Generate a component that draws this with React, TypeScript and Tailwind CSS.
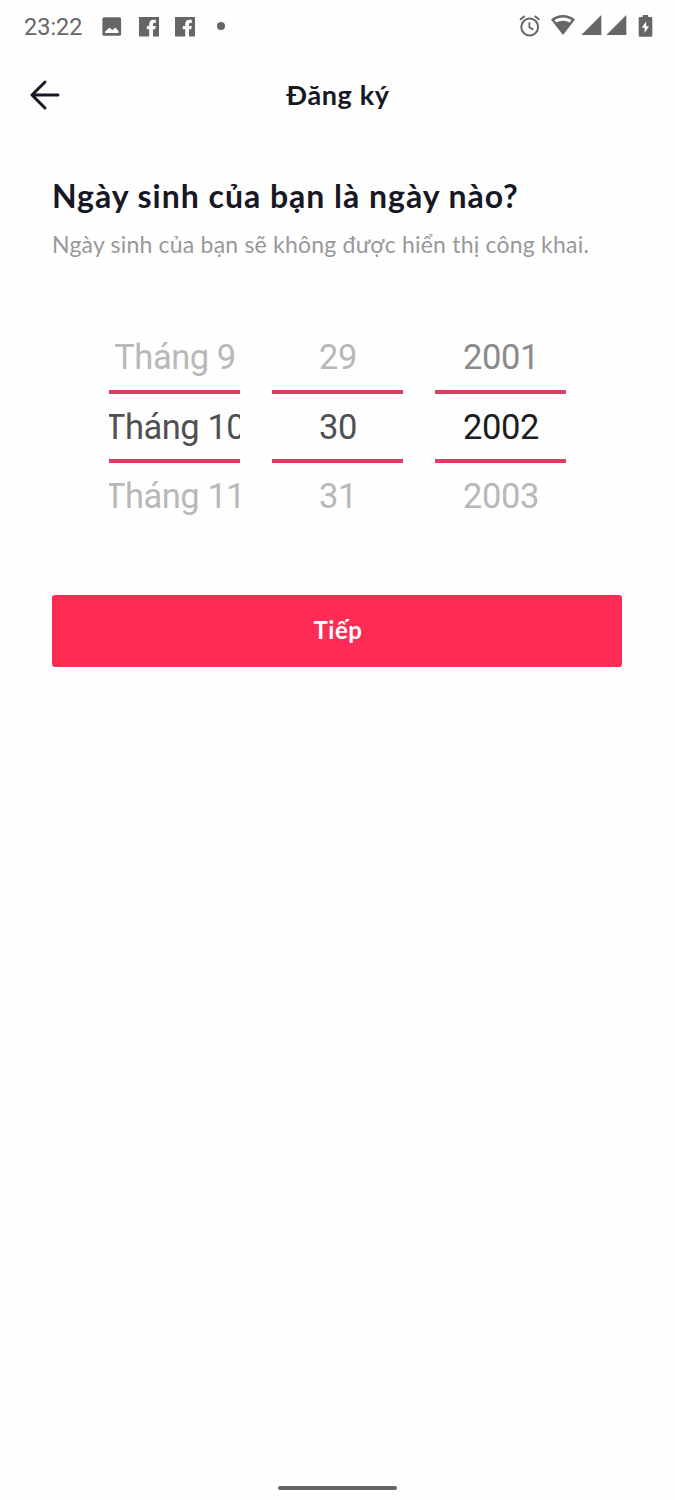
import clsx from "clsx";

type PickerItem = {
  label: string;
  className: string;
};

type PickerColumnProps = {
  items: [PickerItem, PickerItem, PickerItem];
};

const months: PickerColumnProps["items"] = [
  { label: "Tháng 9", className: "text-[#b8b8b8]" },
  { label: "Tháng 10", className: "text-[#505052]" },
  { label: "Tháng 11", className: "text-[#b8b8b8]" },
];

const days: PickerColumnProps["items"] = [
  { label: "29", className: "text-[#b8b8b8]" },
  { label: "30", className: "text-[#505052]" },
  { label: "31", className: "text-[#b8b8b8]" },
];

const years: PickerColumnProps["items"] = [
  { label: "2001", className: "text-[#8a8a8b]" },
  { label: "2002", className: "text-[#1c1d21]" },
  { label: "2003", className: "text-[#b8b8b8]" },
];

function FacebookIcon() {
  return (
    <svg width="20" height="20" viewBox="0 0 20 20" fill="currentColor">
      <path d="M0 0H20V19.5H14V12.2H16.2L16.8 8.9H14V7.2C14 6.3 14.4 6 15.4 6H16.8V2.9C16.5 2.8 15.6 2.7 14.6 2.7C12 2.7 10.2 4.2 10.2 7V8.9H7.8V12.2H10.2V19.5H0Z" />
    </svg>
  );
}

function SignalIcon() {
  return (
    <svg width="21" height="21" viewBox="0 0 21 21" fill="currentColor">
      <path d="M20.3 0V20H0.3Z" />
    </svg>
  );
}

function StatusBar() {
  return (
    <div className="flex h-[54px] items-center text-[#666666]">
      <span className="ml-6 w-[59px] whitespace-nowrap pt-0.5 text-[23.5px] leading-none">23:22</span>
      <svg className="ml-[19px]" width="20" height="20" viewBox="0 0 20 20" fill="currentColor">
        <path
          fillRule="evenodd"
          d="M2 0.3H17.5A1.6 1.6 0 0 1 19.1 1.9V17.2A1.6 1.6 0 0 1 17.5 18.8H2A1.6 1.6 0 0 1 0.4 17.2V1.9A1.6 1.6 0 0 1 2 0.3ZM3 15.9H16.5V14L13.3 10.5L10.6 13L7.3 10.8L3 14.7Z"
        />
      </svg>
      <span className="ml-[17px]"><FacebookIcon /></span>
      <span className="ml-4"><FacebookIcon /></span>
      <span className="-mt-0.5 ml-[22px] size-2 rounded-full bg-[#666666]" />
      <div className="ml-auto mr-[22px] flex items-start">
        <svg width="22" height="22" viewBox="0 0 22 22" fill="none" stroke="currentColor">
          <circle cx="11.7" cy="12" r="8.4" strokeWidth="2" />
          <path d="M11.4 7.3V12.3L15.3 14.6" strokeWidth="1.8" />
          <path d="M2 4.8L6.7 1M21.4 4.8L16.7 1" strokeWidth="2" />
        </svg>
        <svg className="ml-[11px]" width="24" height="21" viewBox="0 0 24 21" fill="currentColor">
          <path
            fillRule="evenodd"
            d="M12 0C7.4 0 3.2 1.7 0 4.4L12 20.1L24 4.4C20.8 1.7 16.6 0 12 0ZM12 2.5C15.3 2.5 18.2 3.4 20.6 5L18.7 7.5C16.8 6.4 14.5 5.7 12 5.7S7.2 6.4 5.3 7.5L3.4 5C5.8 3.4 8.7 2.5 12 2.5Z"
          />
        </svg>
        <span className="ml-[6px]"><SignalIcon /></span>
        <span className="ml-1"><SignalIcon /></span>
        <svg className="mb-0.5 ml-[11px]" width="15" height="22" viewBox="0 0 15 22" fill="currentColor">
          <path
            fillRule="evenodd"
            d="M4.8 0H10.2V2H13A1.3 1.3 0 0 1 14.3 3.3V20.4A1.3 1.3 0 0 1 13 21.7H2A1.3 1.3 0 0 1 0.7 20.4V3.3A1.3 1.3 0 0 1 2 2H4.8ZM8.2 6.3L3.8 12.8H6.6V18L11 11.2H8.2Z"
          />
        </svg>
      </div>
    </div>
  );
}

// Labels stay centred even when wider than the column, so long months clip on both sides.
function PickerColumn({ items }: PickerColumnProps) {
  const [previous, current, next] = items;

  return (
    <div className="w-[131px] overflow-hidden whitespace-nowrap text-[34.5px] leading-none tracking-[-0.45px]">
      <div className={clsx("flex h-[66px] items-center justify-center pl-px pt-px", previous.className)}>
        {previous.label}
      </div>
      <div className="h-1 bg-[#db3e60]" />
      <div className={clsx("flex h-[65px] items-center justify-center pl-px pt-0.5", current.className)}>
        {current.label}
      </div>
      <div className="h-1 bg-[#db3e60]" />
      <div className={clsx("flex h-[66px] items-center justify-center pl-px pt-px", next.className)}>{next.label}</div>
    </div>
  );
}

export default function App() {
  return (
    <div className="flex h-[1500px] w-[675px] flex-col bg-[#fefefe] font-['Roboto',sans-serif]">
      <StatusBar />

      <header className="grid h-[82px] grid-cols-[1fr_auto_1fr] items-center">
        <button type="button" aria-label="Back" className="ml-[29px] w-8 text-[#161823]">
          <svg
            width="32"
            height="32"
            viewBox="0 0 32 32"
            fill="none"
            stroke="currentColor"
            strokeWidth="3"
            strokeLinecap="round"
            strokeLinejoin="round"
          >
            <path d="M16 3L3 16L16 29M3 16H29" />
          </svg>
        </button>
        <h1 className="pb-0.5 pl-px font-['Lato',sans-serif] text-[27px] font-bold leading-none tracking-[0.65px] text-[#161823]">
          Đăng ký
        </h1>
      </header>

      <main className="flex flex-col pl-[52px] pr-[53px] pt-10">
        <h2 className="whitespace-nowrap font-['Lato',sans-serif] text-[32px] font-bold leading-10 tracking-[0.98px] text-[#161823]">
          Ngày sinh của bạn là ngày nào?
        </h2>
        <p className="mt-3 whitespace-nowrap font-['Lato',sans-serif] text-[23px] leading-8 tracking-[0.21px] text-[#98989b]">
          Ngày sinh của bạn sẽ không được hiển thị công khai.
        </p>

        <div className="mt-16 flex justify-center gap-8 pl-px">
          <PickerColumn items={months} />
          <PickerColumn items={days} />
          <PickerColumn items={years} />
        </div>

        <button
          type="button"
          className="mt-[66px] flex h-[72px] items-center justify-center rounded-[3px] bg-[#fe2c55] pb-0.5 pl-0.5 font-['Lato',sans-serif] text-[24px] font-bold tracking-[0.5px] text-white"
        >
          Tiếp
        </button>
      </main>

      <div className="mx-auto mb-[10px] mt-auto h-1 w-[119px] rounded-full bg-[#666666]" />
    </div>
  );
}
